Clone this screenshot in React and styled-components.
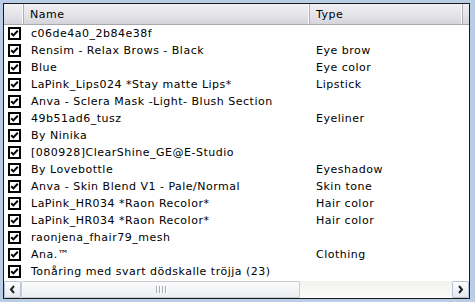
import React from "react";
import styled, { createGlobalStyle } from "styled-components";

const items = [
  { name: "c06de4a0_2b84e38f", type: "" },
  { name: "Rensim - Relax Brows - Black", type: "Eye brow" },
  { name: "Blue", type: "Eye color" },
  { name: "LaPink_Lips024 *Stay matte Lips*", type: "Lipstick" },
  { name: "Anva - Sclera Mask -Light- Blush Section", type: "" },
  { name: "49b51ad6_tusz", type: "Eyeliner" },
  { name: "By Ninika", type: "" },
  { name: "[080928]ClearShine_GE@E-Studio", type: "" },
  { name: "By Lovebottle", type: "Eyeshadow" },
  { name: "Anva - Skin Blend V1 - Pale/Normal", type: "Skin tone" },
  { name: "LaPink_HR034 *Raon Recolor*", type: "Hair color" },
  { name: "LaPink_HR034 *Raon Recolor*", type: "Hair color" },
  { name: "raonjena_fhair79_mesh", type: "" },
  { name: "Ana.\u2122", type: "Clothing" },
  { name: "Tonåring med svart dödskalle tröjja (23)", type: "" },
];

const GlobalStyle = createGlobalStyle`
  html, body {
    margin: 0;
    padding: 0;
    background: #b9cde6;
  }
  body {
    font-family: "DejaVu Sans", "Liberation Sans", sans-serif;
    font-size: 11px;
    letter-spacing: 0.5px;
  }
`;

const Page = styled.div`
  width: 475px;
  height: 302px;
  padding: 3px;
  box-sizing: border-box;
`;

const ListBox = styled.div`
  width: 467px;
  height: 296px;
  box-sizing: border-box;
  border: 1px solid #1b1b1b;
  background: #fff;
  display: flex;
  flex-direction: column;
  overflow: hidden;
`;

const Header = styled.div`
  display: grid;
  grid-template-columns: 20px 286px 153px 1fr;
  height: 21px;
  box-sizing: border-box;
  background: linear-gradient(#f0f0f3, #e0dfe5 70%, #d5d4db);
  border-bottom: 1px solid #a9a8ae;
`;

const HeaderCell = styled.div`
  display: flex;
  align-items: center;
  padding-left: ${(p) => p.$pad || 0}px;
  border-right: ${(p) => (p.$last ? "none" : "1px solid #aeadb3")};
  box-shadow: ${(p) => (p.$last ? "none" : "inset -1px 0 0 #fbfbfc")};
  color: #000;
  white-space: nowrap;
  overflow: hidden;
`;

const Rows = styled.div`
  flex: 1;
`;

const Row = styled.div`
  display: grid;
  grid-template-columns: 20px 286px 153px;
  height: 17px;
  align-items: center;
  color: #000;
`;

const Cell = styled.div`
  padding-left: ${(p) => p.$pad}px;
  white-space: nowrap;
  overflow: hidden;
  line-height: 17px;
`;

const CheckCell = styled.div`
  display: flex;
  align-items: center;
  padding-left: 4px;
  height: 17px;
`;

const ScrollBar = styled.div`
  display: flex;
  height: 17px;
  background: linear-gradient(#f5f4f2, #eeede8);
`;

const ArrowButton = styled.div`
  width: 17px;
  height: 17px;
  box-sizing: border-box;
  border: 1px solid #b7c3d6;
  border-radius: 2px;
  background: linear-gradient(#ffffff, #e6e8ef);
  display: flex;
  align-items: center;
  justify-content: center;
`;

const Track = styled.div`
  flex: 1;
  display: flex;
  background: linear-gradient(#f3f2ee, #fbfbf9);
`;

const Thumb = styled.div`
  width: 279px;
  height: 17px;
  box-sizing: border-box;
  border: 1px solid #c9cbd3;
  border-radius: 2px;
  background: linear-gradient(#fbfbfb, #eceef2);
  display: flex;
  align-items: center;
  justify-content: center;
  gap: 2px;
`;

const Grip = styled.span`
  width: 1px;
  height: 7px;
  background: #a8abb6;
  box-shadow: 1px 0 0 #fff;
`;

const CheckBox = () => (
  <svg width="13" height="13" viewBox="0 0 13 13">
    <rect x="1" y="1" width="11" height="11" fill="#fff" stroke="#000" strokeWidth="2" />
    <path d="M3.2 6.2 L5.4 8.4 L9.8 3.8" fill="none" stroke="#000" strokeWidth="2" />
  </svg>
);

const Arrow = ({ dir }) => (
  <svg width="7" height="9" viewBox="0 0 7 9">
    <path
      d={dir === "left" ? "M5 1 L2 4.5 L5 8" : "M2 1 L5 4.5 L2 8"}
      fill="none"
      stroke="#222"
      strokeWidth="2"
    />
  </svg>
);

const App = () => {
  return (
    <Page>
      <GlobalStyle />
      <ListBox>
        <Header>
          <HeaderCell />
          <HeaderCell $pad={6}>Name</HeaderCell>
          <HeaderCell $pad={6}>Type</HeaderCell>
          <HeaderCell $last />
        </Header>
        <Rows>
          {items.map((item, i) => (
            <Row key={i}>
              <CheckCell>
                <CheckBox />
              </CheckCell>
              <Cell $pad={7}>{item.name}</Cell>
              <Cell $pad={6}>{item.type}</Cell>
            </Row>
          ))}
        </Rows>
        <ScrollBar>
          <ArrowButton>
            <Arrow dir="left" />
          </ArrowButton>
          <Track>
            <Thumb>
              <Grip />
              <Grip />
              <Grip />
              <Grip />
            </Thumb>
          </Track>
          <ArrowButton>
            <Arrow dir="right" />
          </ArrowButton>
        </ScrollBar>
      </ListBox>
    </Page>
  );
};

export default App;
